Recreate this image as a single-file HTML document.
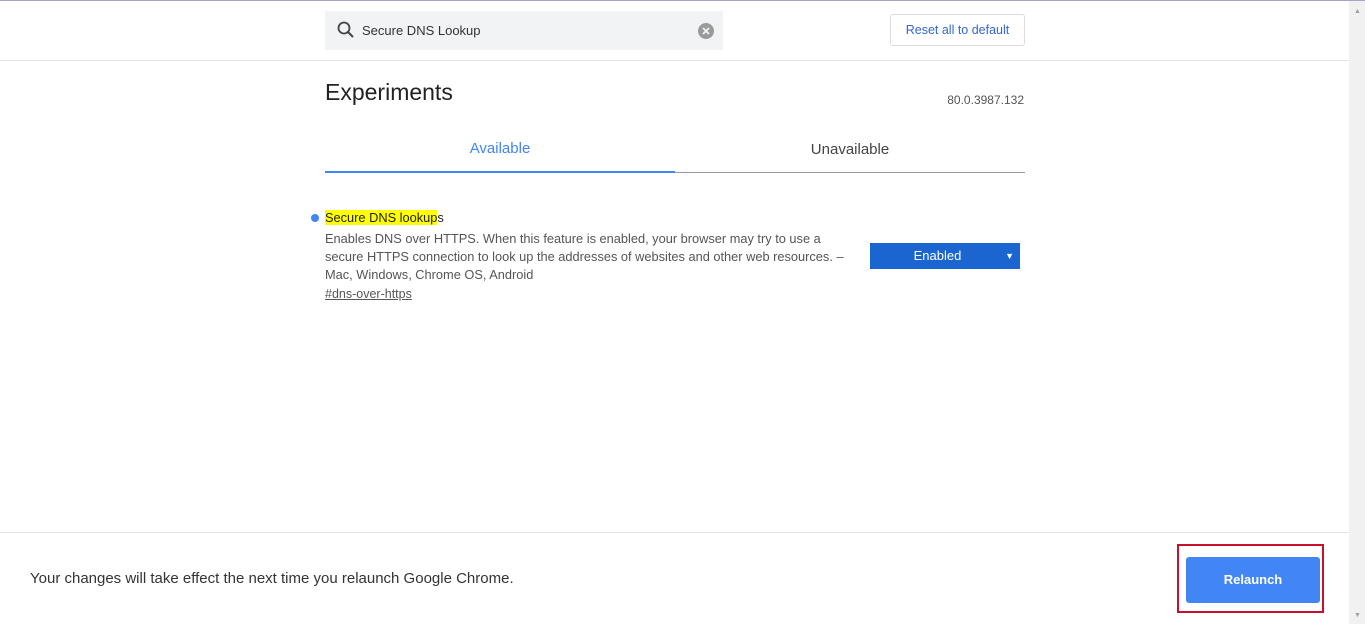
<!DOCTYPE html><html><head><style>
body{margin:0;width:1365px;height:624px;position:relative;background:#fff;font-family:"Liberation Sans",sans-serif;overflow:hidden}
.a{position:absolute}
</style></head><body>
<div class="a" style="left:0;top:0;width:1365px;height:1px;background:#a9a3c9"></div>
<div class="a" style="left:1349px;top:1px;width:16px;height:623px;background:#f1f1f1"></div>
<div class="a" style="left:1354px;top:8px;font-size:7px;color:#a0a0a0">▲</div>
<div class="a" style="left:1354px;top:612px;font-size:7px;color:#a0a0a0">▼</div>
<div class="a" style="left:0;top:60px;width:1349px;height:1px;background:#e4e4e4"></div>
<div class="a" style="left:325px;top:11px;width:398px;height:39px;background:#f1f3f4;border-radius:2px"></div>
<svg class="a" style="left:336px;top:20px" width="20" height="20" viewBox="0 0 20 20"><circle cx="8" cy="8" r="5.5" fill="none" stroke="#444" stroke-width="1.8"/><line x1="12" y1="12" x2="17" y2="17" stroke="#444" stroke-width="2"/></svg>
<div class="a" style="left:362px;top:23px;font-size:13px;color:#333">Secure DNS Lookup</div>
<svg class="a" style="left:697px;top:22px" width="18" height="18"><circle cx="9" cy="9" r="8" fill="#9a9a9a"/><path d="M6 6L12 12M12 6L6 12" stroke="#f1f3f4" stroke-width="1.8"/></svg>
<div class="a" style="left:890px;top:14px;width:135px;height:32px;border:1px solid #dadce0;border-radius:3px;box-sizing:border-box;font-size:12.5px;color:#3367d6;text-align:center;line-height:31px">Reset all to default</div>
<div class="a" style="left:325px;top:79px;font-size:23px;color:#222">Experiments</div>
<div class="a" style="left:925px;top:93px;width:99px;text-align:right;font-size:12px;color:#555">80.0.3987.132</div>
<div class="a" style="left:325px;top:140px;width:350px;text-align:center;font-size:15px;color:#4285f4">Available</div>
<div class="a" style="left:675px;top:141px;width:350px;text-align:center;font-size:15px;color:#444">Unavailable</div>
<div class="a" style="left:325px;top:172px;width:700px;height:1px;background:#999"></div>
<div class="a" style="left:325px;top:171px;width:350px;height:2px;background:#4285f4"></div>
<div class="a" style="left:311px;top:214px;width:8px;height:8px;border-radius:50%;background:#4285f4"></div>
<div class="a" style="left:325px;top:210px;font-size:12.8px;color:#222"><span style="background:#ffff00">Secure DNS lookup</span>s</div>
<div class="a" style="left:325px;top:230px;width:560px;font-size:12.8px;line-height:18px;color:#555;white-space:nowrap">Enables DNS over HTTPS. When this feature is enabled, your browser may try to use a<br>secure HTTPS connection to look up the addresses of websites and other web resources. –<br>Mac, Windows, Chrome OS, Android</div>
<div class="a" style="left:325px;top:287px;font-size:12.5px;color:#555;text-decoration:underline">#dns-over-https</div>
<div class="a" style="left:870px;top:243px;width:150px;height:26px;background:#1a65d0;color:#fff;font-size:13px;line-height:26px"><span style="position:absolute;left:0;width:135px;text-align:center">Enabled</span><span style="position:absolute;right:6px;font-size:9px">▼</span></div>
<div class="a" style="left:0;top:532px;width:1349px;height:1px;background:#e4e4e4"></div>
<div class="a" style="left:30px;top:570px;font-size:15px;color:#333">Your changes will take effect the next time you relaunch Google Chrome.</div>
<div class="a" style="left:1177px;top:544px;width:147px;height:69px;border:2px solid #c8102e;box-sizing:border-box"></div>
<div class="a" style="left:1186px;top:557px;width:134px;height:46px;background:#4285f4;border-radius:3px;color:#fff;font-weight:bold;font-size:13px;text-align:center;line-height:46px">Relaunch</div>
</body></html>
